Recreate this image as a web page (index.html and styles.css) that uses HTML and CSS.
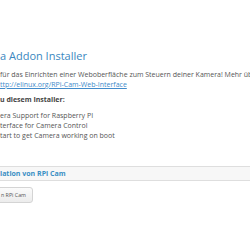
FILE: index.html
```html
<!DOCTYPE html>
<html lang="de">
<head>
<meta charset="utf-8">
<title>RPi Camera Addon Installer</title>
<link rel="stylesheet" href="styles.css">
</head>
<body>
<div class="page">
  <section class="content">
    <h1 class="title">a Addon Installer</h1>
    <p class="intro">für das Einrichten einer Weboberfläche zum Steuern deiner Kamera! Mehr über das Projekt:<br><a class="link" href="#">ttp://elinux.org/RPi-Cam-Web-Interface</a></p>
    <p class="req-title">u diesem Installer:</p>
    <ul class="req-list">
      <li>era Support for Raspberry PI</li>
      <li>terface for Camera Control</li>
      <li>tart to get Camera working on boot</li>
    </ul>
  </section>
  <section class="panel">
    <div class="panel-heading">lation von RPi Cam</div>
    <div class="panel-body">
      <button class="btn" type="button">n RPi Cam</button>
    </div>
  </section>
</div>
</body>
</html>
```
FILE: styles.css
```css
html, body {
  margin: 0;
  padding: 0;
  background: #fff;
}
body {
  font-family: "Open Sans", "Liberation Sans", sans-serif;
  font-size: 7px;
  line-height: 10px;
  color: #555;
}
.page {
  width: 250px;
  height: 250px;
  overflow: hidden;
}
.content {
  padding-top: 49px;
}
.title {
  margin: 0 0 7px;
  font-size: 11px;
  line-height: 14px;
  font-weight: 400;
  color: #3a87c0;
  white-space: nowrap;
}
.intro {
  margin: 0 0 5px;
  white-space: nowrap;
}
.link {
  color: #428bca;
  text-decoration: underline;
}
.req-title {
  margin: 0 0 6px;
  font-weight: 700;
  color: #444;
}
.req-list {
  list-style: none;
  margin: 0;
  padding: 0;
}
.panel {
  margin-top: 25px;
}
.panel-heading {
  background: #f7f7f7;
  border-top: 1px solid #dedede;
  border-bottom: 1px solid #dedede;
  height: 13px;
  line-height: 13px;
  font-weight: 700;
  color: #3a8fc4;
  white-space: nowrap;
}
.panel-body {
  padding-top: 6px;
}
.btn {
  display: block;
  margin: 0 0 0 -6px;
  height: 16px;
  padding: 0 6px 0 6px;
  border: 1px solid #d4d4d4;
  border-radius: 3px;
  background: linear-gradient(#fbfbfb, #ececec);
  font-family: "Open Sans", "Liberation Sans", sans-serif;
  font-size: 5.3px;
  line-height: 14px;
  color: #555;
}
```
